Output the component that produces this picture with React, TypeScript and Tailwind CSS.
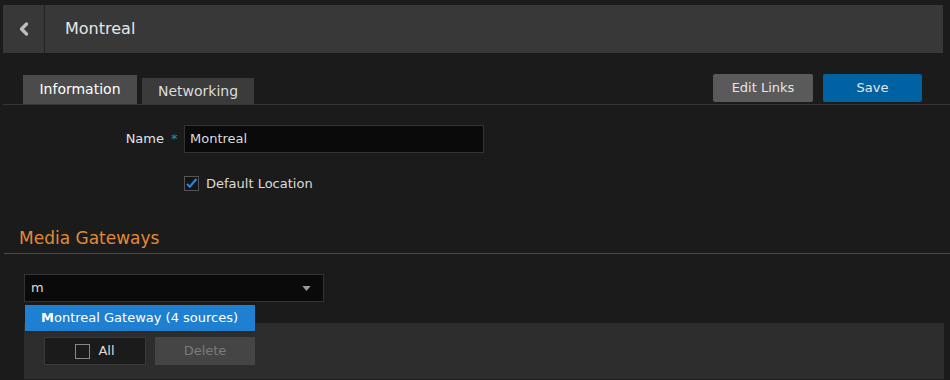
import { ChevronLeft } from 'lucide-react'

export default function App() {
  return (
    <div className="w-[950px] h-[380px] overflow-hidden bg-[#1b1b1b] text-[13px] text-[#dcdcdc] font-['DejaVu_Sans',Verdana,sans-serif]">
      <Header />
      <TabBar />
      <InfoForm />
      <MediaGateways />
    </div>
  )
}

function Header() {
  return (
    <div className="pt-[5px] pl-[3px] pr-[7px]">
      <div className="flex h-[48px] bg-[#383838]">
        <button className="w-[42px] flex items-center justify-center border-r border-[#232323]">
          <ChevronLeft className="h-5 w-5 text-[#bdbdbd]" strokeWidth={4} />
        </button>
        <div className="flex items-center pl-[20px] text-[16px] text-[#e6e6e6]">Montreal</div>
      </div>
    </div>
  )
}

function TabBar() {
  return (
    <div className="mt-[21px] ml-[3px] flex items-end justify-between border-b border-[#353535] pr-[28px]">
      <div className="flex items-end gap-[5px] pl-[20px] text-[14px]">
        <div className="h-[29px] w-[114px] flex items-center justify-center bg-[#4b4b4b] text-white">
          Information
        </div>
        <div className="h-[26px] w-[112px] flex items-center justify-center bg-[#3b3b3b] text-[#dcdcdc]">
          Networking
        </div>
      </div>
      <div className="flex gap-[10px] pb-[2px]">
        <button className="h-[28px] w-[100px] rounded-[2px] bg-[#5a5a5a] text-[#e6e6e6]">Edit Links</button>
        <button className="h-[28px] w-[99px] rounded-[2px] bg-[#0062a3] text-[#e6e6e6]">Save</button>
      </div>
    </div>
  )
}

function InfoForm() {
  return (
    <div className="pt-[20px]">
      <div className="flex items-center">
        <div className="w-[164px] text-right text-[#e0e4ea]">Name</div>
        <span className="ml-[7px] w-[13px] text-[#2c86d4]">*</span>
        <div className="h-[28px] w-[300px] flex items-center px-[5px] bg-[#0a0a0a] border border-[#333]">
          Montreal
        </div>
      </div>
      <div className="mt-[21px] ml-[184px] flex items-center gap-[7px]">
        <div className="h-[15px] w-[15px] border border-[#555] bg-[#151515] flex items-center justify-center">
          <svg viewBox="0 0 16 16" className="h-[15px] w-[15px]">
            <path d="M2.5 8.5 L6 12 L14 2.5" fill="none" stroke="#2c86d4" strokeWidth="2.6" />
          </svg>
        </div>
        <span>Default Location</span>
      </div>
    </div>
  )
}

function MediaGateways() {
  return (
    <div className="mt-[32px]">
      <div className="ml-[4px] border-b border-[#4a4a4a] pl-[15px] pb-[2px] text-[17px] text-[#e08a3a]">
        Media Gateways
      </div>
      <div className="relative mt-[20px] pl-[24px] pr-[6px]">
        <div className="h-[28px] w-[300px] flex items-center justify-between px-[6px] bg-[#0a0a0a] border border-[#333]">
          <span>m</span>
          <svg viewBox="0 0 10 6" className="h-[5px] w-[9px] mr-[6px]">
            <path d="M0 0 L10 0 L5 6 Z" fill="#9a9a9a" />
          </svg>
        </div>
        <div className="mt-[21px] h-[56px] bg-[#2d2d2d] flex items-center gap-[9px] pl-[20px]">
          <button className="h-[28px] w-[102px] flex items-center justify-center gap-[8px] bg-[#1b1b1b] border border-[#3a3a3a]">
            <span className="h-[15px] w-[15px] border border-[#888]" />
            <span>All</span>
          </button>
          <button className="h-[28px] w-[100px] bg-[#454545] text-[#7a7a7a]">Delete</button>
        </div>
        <div className="absolute left-[25px] top-[31px] h-[26px] w-[230px] flex items-center pl-[16px] bg-[#1f7fd1] text-white shadow">
          <span className="font-bold">M</span>ontreal Gateway (4 sources)
        </div>
      </div>
    </div>
  )
}
